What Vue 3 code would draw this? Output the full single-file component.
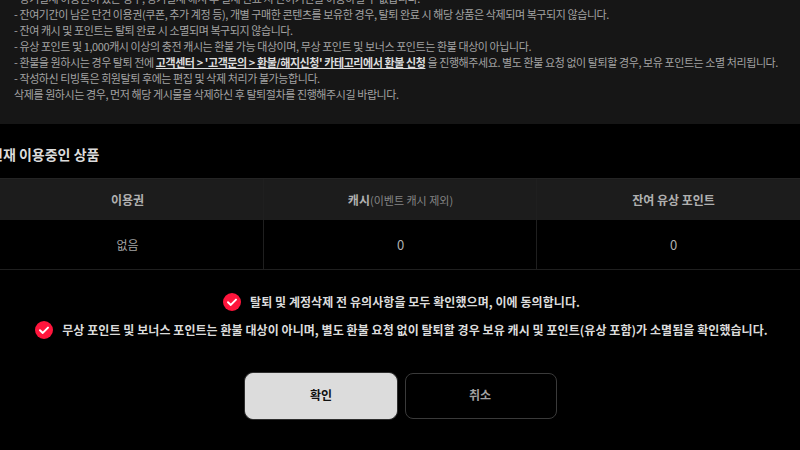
<script setup>
const notices = [
  '- 잔여기간이 남은 단건 이용권(쿠폰, 추가 계정 등), 개별 구매한 콘텐츠를 보유한 경우, 탈퇴 완료 시 해당 상품은 삭제되며 복구되지 않습니다.',
  '- 잔여 캐시 및 포인트는 탈퇴 완료 시 소멸되며 복구되지 않습니다.',
  '- 유상 포인트 및 1,000캐시 이상의 충전 캐시는 환불 가능 대상이며, 무상 포인트 및 보너스 포인트는 환불 대상이 아닙니다.'
]
</script>

<template>
  <div class="page">
    <section class="notice">
      <p class="clipped">- 장기결제 이용권이 있는 경우, 장기결제 해지 후 결제 완료 시 잔여기간을 이용하실 수 없습니다.</p>
      <p v-for="n in notices" :key="n">{{ n }}</p>
      <p>- 환불을 원하시는 경우 탈퇴 전에 <a>고객센터 &gt; '고객문의 &gt; 환불/해지신청' 카테고리에서 환불 신청</a> 을 진행해주세요. 별도 환불 요청 없이 탈퇴할 경우, 보유 포인트는 소멸 처리됩니다.</p>
      <p>- 작성하신 티빙톡은 회원탈퇴 후에는 편집 및 삭제 처리가 불가능합니다.</p>
      <p>삭제를 원하시는 경우, 먼저 해당 게시물을 삭제하신 후 탈퇴절차를 진행해주시길 바랍니다.</p>
    </section>
    <h2 class="title">현재 이용중인 상품</h2>
    <div class="table">
      <div class="cell head">이용권</div>
      <div class="cell head">캐시<span class="sub">(이벤트 캐시 제외)</span></div>
      <div class="cell head">잔여 유상 포인트</div>
      <div class="cell body">없음</div>
      <div class="cell body num">0</div>
      <div class="cell body num">0</div>
    </div>
    <div class="agree">
      <div class="check">
        <svg class="tick" viewBox="0 0 18 18"><circle cx="9" cy="9" r="9" fill="#ff153c"/><path d="M5 9.3l2.8 2.6L13 6.6" fill="none" stroke="#fff" stroke-width="2" stroke-linecap="round" stroke-linejoin="round"/></svg>
        <span>탈퇴 및 계정삭제 전 유의사항을 모두 확인했으며, 이에 동의합니다.</span>
      </div>
      <div class="check">
        <svg class="tick" viewBox="0 0 18 18"><circle cx="9" cy="9" r="9" fill="#ff153c"/><path d="M5 9.3l2.8 2.6L13 6.6" fill="none" stroke="#fff" stroke-width="2" stroke-linecap="round" stroke-linejoin="round"/></svg>
        <span>무상 포인트 및 보너스 포인트는 환불 대상이 아니며, 별도 환불 요청 없이 탈퇴할 경우 보유 캐시 및 포인트(유상 포함)가 소멸됨을 확인했습니다.</span>
      </div>
    </div>
    <div class="actions">
      <button class="btn primary">확인</button>
      <button class="btn ghost">취소</button>
    </div>
  </div>
</template>

<style scoped>
.page {
  width: 800px;
  height: 450px;
  overflow: hidden;
  background: #000;
  font-family: "Noto Sans CJK KR", "Noto Sans", sans-serif;
  color: #a3a3a3;
}
.notice {
  background: #161616;
  height: 134px;
  padding-left: 14px;
  box-sizing: border-box;
  font-size: 11px;
  line-height: 16px;
  letter-spacing: -0.42px;
  color: #a3a3a3;
}
.notice p { margin: 0; white-space: nowrap; }
.clipped { margin-top: -10px !important; }
.notice a { color: #dcdcdc; font-weight: 700; text-decoration: underline; }
.title {
  margin: 20px 0 14px -10px;
  font-size: 14px;
  line-height: 20px;
  font-weight: 700;
  color: #dcdcdc;
}
.table {
  width: 819px;
  margin-left: -9px;
  display: grid;
  grid-template-columns: repeat(3, 273px);
  grid-template-rows: 41px 49px;
  border-bottom: 1px solid #1f1f1f;
  border-top: 1px solid #242424;
  box-sizing: content-box;
}
.cell {
  display: flex;
  align-items: center;
  justify-content: center;
  padding-left: 1px;
  font-size: 12px;
  border-right: 1px solid #1f1f1f;
  box-sizing: border-box;
}
.head { background: #1c1c1c; font-weight: 700; color: #b0b0b0; }
.sub { font-weight: 400; font-size: 11px; color: #858585; }
.body { color: #a3a3a3; }
.num { font-size: 13px; color: #b0b0b0; }
.agree {
  margin-top: 23px;
  padding-left: 3px;
  display: flex;
  flex-direction: column;
  align-items: center;
  gap: 10px;
}
.check {
  display: flex;
  align-items: center;
  gap: 9px;
  font-size: 12px;
  font-weight: 700;
  line-height: 18px;
  letter-spacing: 0.06px;
  color: #dcdcdc;
  white-space: nowrap;
}
.tick { width: 18px; height: 18px; flex: none; }
.actions {
  margin-top: 34px;
  padding-left: 2px;
  display: flex;
  justify-content: center;
  gap: 8px;
}
.btn {
  width: 152px;
  height: 46px;
  padding: 0 0 3px;
  border-radius: 8px;
  font-family: inherit;
  font-size: 12px;
  font-weight: 700;
  box-sizing: border-box;
}
.primary { background: #dcdcdc; color: #111; border: 1px solid #dcdcdc; box-shadow: 0 0 0 1px #2e2e2e; }
.ghost { background: #000; color: #a3a3a3; border: 1px solid #3a3a3a; padding-right: 2px; }
</style>
